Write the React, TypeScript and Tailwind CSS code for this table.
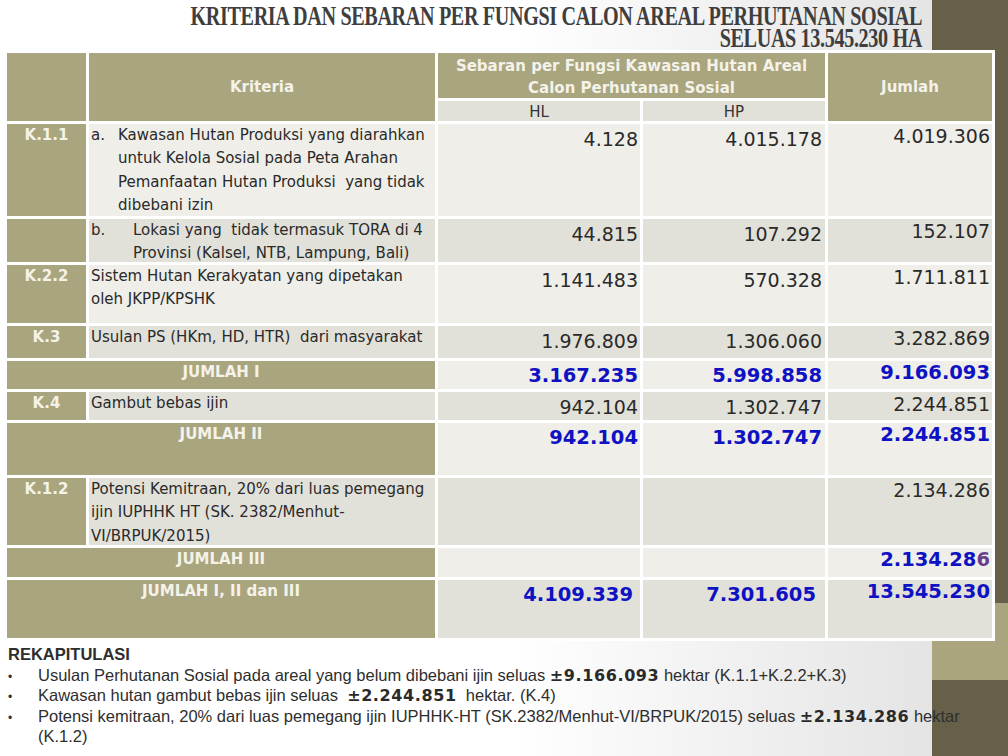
import type { ReactNode } from "react";

// Slide: kriteria & sebaran per fungsi calon areal perhutanan sosial.
// Table is a 5-col grid with 3px white gutters; the dark/olive strip on the
// right is just the root's background showing past the 932px content column.

const OLIVE = "bg-[#a9a57e]";
const LIGHT = "bg-[#efeee9]";
const DARK = "bg-[#e2e1d9]";

const tahoma = { fontFamily: '"DejaVu Sans", Verdana, sans-serif' };
const narrow = { fontFamily: '"Liberation Sans", Arial, sans-serif' };
const serif = { fontFamily: '"Liberation Serif", "Times New Roman", serif' };

function Code({ children }: { children?: ReactNode }) {
  return (
    <div className={`${OLIVE} text-center text-[15px] font-bold leading-[23px] text-[#f4f2e9]`}>{children}</div>
  );
}

function Desc({ shade, children }: { shade: string; children: ReactNode }) {
  return <div className={`${shade} pl-[2px] text-[15px] leading-[23.4px] text-[#2a2a2a]`}>{children}</div>;
}

function Sum({ children }: { children: ReactNode }) {
  return (
    <div className={`${OLIVE} col-span-2 text-center text-[15px] font-bold leading-[23px] text-[#f4f2e9]`}>{children}</div>
  );
}

function Num({ shade, v, bold, total, pr = "pr-[2px]" }: { shade: string; v?: ReactNode; bold?: boolean; total?: boolean; pr?: string }) {
  return (
    <div
      className={`${shade} ${pr} text-right leading-[24px] ${total ? "pt-0" : "pt-[3px]"} ${
        bold ? "text-[19.5px] font-bold text-[#0e12c2]" : "text-[19px] text-[#2a2a2a]"
      }`}
    >
      {v}
    </div>
  );
}

function Bullet({ children }: { children: ReactNode }) {
  return (
    <li className="flex items-baseline whitespace-nowrap leading-[20.5px]">
      <span className="w-[30px] shrink-0 text-[12px] leading-none">•</span>
      <span>{children}</span>
    </li>
  );
}

function Ha({ children }: { children: ReactNode }) {
  return (
    <b className="text-[16px] leading-none tracking-[0.6px] text-[#2a2a2a]" style={tahoma}>
      {children}
    </b>
  );
}

export default function App() {
  return (
    <div
      className="w-[1008px] h-[756px] overflow-hidden bg-[linear-gradient(to_bottom,#676049_603px,#aaa57f_603px,#aaa57f_680px,#676049_680px)]"
      style={tahoma}
    >
      <div className="w-[932px] h-full bg-[linear-gradient(to_right,#ffffff_0%,#ffffff_55%,#e4e4e4_100%)]">
        {/* title */}
        <div className="h-[50px] pt-[5px] pr-[10px] flex flex-col items-end text-[#3e3e3e]" style={serif}>
          <div className="inline-block origin-right scale-x-[0.72] whitespace-nowrap text-[28px] font-bold leading-[22px] tracking-[-0.5px]">
            KRITERIA DAN SEBARAN PER FUNGSI CALON AREAL PERHUTANAN SOSIAL
          </div>
          <div className="inline-block origin-right scale-x-[0.72] whitespace-nowrap text-[28px] font-bold leading-[22px] tracking-[-0.5px]">
            SELUAS 13.545.230 HA
          </div>
        </div>

        {/* table */}
        <div className="ml-[4px] w-[991px] grid grid-cols-[79px_346px_202px_182px_164px] grid-rows-[45px_20px_92px_43px_58px_32px_28px_28px_52px_67px_29px_58px] gap-[3px] p-[3px] bg-white">
          <div className={`${OLIVE} row-span-2`} />
          <div className={`${OLIVE} row-span-2 flex items-center justify-center text-[15px] font-bold text-[#f4f2e9]`}>Kriteria</div>
          <div className={`${OLIVE} col-span-2 flex flex-col items-center pt-[2px] text-[15px] font-bold leading-[22px] text-[#f4f2e9]`}>
            <span>Sebaran per Fungsi Kawasan Hutan Areal</span>
            <span>Calon Perhutanan Sosial</span>
          </div>
          <div className={`${OLIVE} row-span-2 flex items-center justify-center text-[15px] font-bold text-[#f4f2e9]`}>Jumlah</div>
          <div className={`${DARK} text-center text-[15px] leading-[22px] text-[#333]`}>HL</div>
          <div className={`${DARK} text-center text-[15px] leading-[22px] text-[#333]`}>HP</div>

          {/* K.1.1 a */}
          <Code>K.1.1</Code>
          <Desc shade={LIGHT}>
            <div className="flex">
              <span className="w-[27px] shrink-0">a.</span>
              <div className="flex flex-col">
                <span>Kawasan Hutan Produksi yang diarahkan</span>
                <span>untuk Kelola Sosial pada Peta Arahan</span>
                <span>Pemanfaatan Hutan Produksi&nbsp; yang tidak</span>
                <span>dibebani izin</span>
              </div>
            </div>
          </Desc>
          <Num shade={LIGHT} v="4.128" />
          <Num shade={LIGHT} v="4.015.178" pr="pr-[3px]" />
          <Num shade={LIGHT} v="4.019.306" total />

          {/* K.1.1 b */}
          <Code />
          <Desc shade={DARK}>
            <div className="flex">
              <span className="w-[42px] shrink-0">b.</span>
              <div className="flex flex-col">
                <span>Lokasi yang&nbsp; tidak termasuk TORA di 4</span>
                <span>Provinsi (Kalsel, NTB, Lampung, Bali)</span>
              </div>
            </div>
          </Desc>
          <Num shade={DARK} v="44.815" />
          <Num shade={DARK} v="107.292" pr="pr-[3px]" />
          <Num shade={DARK} v="152.107" total />

          {/* K.2.2 */}
          <Code>K.2.2</Code>
          <Desc shade={LIGHT}>
            <div className="flex flex-col">
              <span>Sistem Hutan Kerakyatan yang dipetakan</span>
              <span>oleh JKPP/KPSHK</span>
            </div>
          </Desc>
          <Num shade={LIGHT} v="1.141.483" />
          <Num shade={LIGHT} v="570.328" pr="pr-[3px]" />
          <Num shade={LIGHT} v="1.711.811" total />

          {/* K.3 */}
          <Code>K.3</Code>
          <Desc shade={DARK}>Usulan PS (HKm, HD, HTR)&nbsp; dari masyarakat</Desc>
          <Num shade={DARK} v="1.976.809" />
          <Num shade={DARK} v="1.306.060" pr="pr-[3px]" />
          <Num shade={DARK} v="3.282.869" total />

          <Sum>JUMLAH I</Sum>
          <Num shade={LIGHT} v="3.167.235" bold />
          <Num shade={LIGHT} v="5.998.858" bold pr="pr-[3px]" />
          <Num shade={LIGHT} v="9.166.093" bold total />

          {/* K.4 */}
          <Code>K.4</Code>
          <Desc shade={DARK}>Gambut bebas ijin</Desc>
          <Num shade={DARK} v="942.104" />
          <Num shade={DARK} v="1.302.747" pr="pr-[3px]" />
          <Num shade={DARK} v="2.244.851" total />

          <Sum>JUMLAH II</Sum>
          <Num shade={LIGHT} v="942.104" bold />
          <Num shade={LIGHT} v="1.302.747" bold pr="pr-[3px]" />
          <Num shade={LIGHT} v="2.244.851" bold total />

          {/* K.1.2 */}
          <Code>K.1.2</Code>
          <Desc shade={DARK}>
            <div className="flex flex-col">
              <span>Potensi Kemitraan, 20% dari luas pemegang</span>
              <span>ijin IUPHHK HT (SK. 2382/Menhut-</span>
              <span>VI/BRPUK/2015)</span>
            </div>
          </Desc>
          <Num shade={DARK} />
          <Num shade={DARK} />
          <Num shade={DARK} v="2.134.286" total />

          <Sum>JUMLAH III</Sum>
          <Num shade={LIGHT} />
          <Num shade={LIGHT} />
          <Num shade={LIGHT} bold v={<>2.134.28<span className="text-[#6a3d8c]">6</span></>} total />

          <Sum>JUMLAH I, II dan III</Sum>
          <Num shade={DARK} v="4.109.339" bold pr="pr-[7px]" />
          <Num shade={DARK} v="7.301.605" bold pr="pr-[9px]" />
          <Num shade={DARK} v="13.545.230" bold total />
        </div>

        {/* rekap */}
        <div className="pl-[8px] pt-[3px] text-[16.5px] leading-[20.5px] text-[#2e2e2e]" style={narrow}>
          <div className="font-bold">REKAPITULASI</div>
          <ul>
            <Bullet>
              Usulan Perhutanan Sosial pada areal yang belum dibebani ijin seluas <Ha>±9.166.093</Ha> hektar (K.1.1+K.2.2+K.3)
            </Bullet>
            <Bullet>
              Kawasan hutan gambut bebas ijin seluas&nbsp; <Ha>±2.244.851</Ha>&nbsp; hektar. (K.4)
            </Bullet>
            <Bullet>
              Potensi kemitraan, 20% dari luas pemegang ijin IUPHHK-HT (SK.2382/Menhut-VI/BRPUK/2015) seluas <Ha>±2.134.286</Ha> hektar
              <br />
              (K.1.2)
            </Bullet>
          </ul>
        </div>
      </div>
    </div>
  );
}
